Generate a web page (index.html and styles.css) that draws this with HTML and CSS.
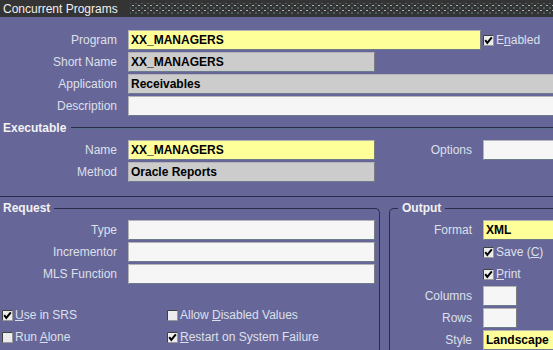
FILE: index.html
```html
<!DOCTYPE html>
<html lang="en">
<head>
  <meta charset="UTF-8">
  <title>Concurrent Programs</title>
  <link rel="stylesheet" href="styles.css">
</head>
<body>

<div class="titlebar">
  <span class="title">Concurrent Programs</span>
  <span class="grip"></span>
</div>

<main class="form">
  <div class="row">
    <span class="lbl">Program</span>
    <div class="field req w353">XX_MANAGERS</div>
    <span class="check ml2">
      <svg width="11" height="11" viewBox="0 0 11 11"><rect x="0.5" y="0.5" width="10" height="10" fill="#ececec" stroke="#9a9a9a"/><path d="M0.5 10.5V0.5H10.5" fill="none" stroke="#404040"/><polyline points="2.2,5.2 4.3,7.8 8.8,2.4" fill="none" stroke="#000" stroke-width="2"/></svg>
      <span>E<u>n</u>abled</span>
    </span>
  </div>
  <div class="row">
    <span class="lbl">Short Name</span>
    <div class="field ro w247">XX_MANAGERS</div>
  </div>
  <div class="row">
    <span class="lbl">Application</span>
    <div class="field ro wide">Receivables</div>
  </div>
  <div class="row">
    <span class="lbl">Description</span>
    <div class="field blank wide"></div>
  </div>

  <div class="section-head"><span>Executable</span><i class="rule"></i></div>

  <div class="row">
    <span class="lbl">Name</span>
    <div class="field req w247">XX_MANAGERS</div>
    <span class="lbl w97">Options</span>
    <div class="field blank wide"></div>
  </div>
  <div class="row">
    <span class="lbl">Method</span>
    <div class="field ro w247">Oracle Reports</div>
  </div>

  <div class="sep"></div>

  <div class="bottom">
    <fieldset class="group request">
      <legend>Request</legend>
      <div class="row first">
        <span class="lbl">Type</span>
        <div class="field blank w247"></div>
      </div>
      <div class="row">
        <span class="lbl">Incrementor</span>
        <div class="field blank w247"></div>
      </div>
      <div class="row">
        <span class="lbl">MLS Function</span>
        <div class="field blank w247"></div>
      </div>

      <div class="checks">
        <span class="check">
          <svg width="11" height="11" viewBox="0 0 11 11"><rect x="0.5" y="0.5" width="10" height="10" fill="#ececec" stroke="#9a9a9a"/><path d="M0.5 10.5V0.5H10.5" fill="none" stroke="#404040"/><polyline points="2.2,5.2 4.3,7.8 8.8,2.4" fill="none" stroke="#000" stroke-width="2"/></svg>
          <span><u>U</u>se in SRS</span>
        </span>
        <span class="check">
          <svg width="11" height="11" viewBox="0 0 11 11"><rect x="0.5" y="0.5" width="10" height="10" fill="#ececec" stroke="#9a9a9a"/><path d="M0.5 10.5V0.5H10.5" fill="none" stroke="#404040"/></svg>
          <span>Allow <u>D</u>isabled Values</span>
        </span>
        <span class="check">
          <svg width="11" height="11" viewBox="0 0 11 11"><rect x="0.5" y="0.5" width="10" height="10" fill="#ececec" stroke="#9a9a9a"/><path d="M0.5 10.5V0.5H10.5" fill="none" stroke="#404040"/></svg>
          <span>Run <u>A</u>lone</span>
        </span>
        <span class="check">
          <svg width="11" height="11" viewBox="0 0 11 11"><rect x="0.5" y="0.5" width="10" height="10" fill="#ececec" stroke="#9a9a9a"/><path d="M0.5 10.5V0.5H10.5" fill="none" stroke="#404040"/><polyline points="2.2,5.2 4.3,7.8 8.8,2.4" fill="none" stroke="#000" stroke-width="2"/></svg>
          <span><u>R</u>estart on System Failure</span>
        </span>
      </div>
    </fieldset>

    <fieldset class="group output">
      <legend>Output</legend>
      <div class="row first">
        <span class="lbl w82">Format</span>
        <div class="field req wide">XML</div>
      </div>
      <div class="row">
        <span class="check ml93">
          <svg width="11" height="11" viewBox="0 0 11 11"><rect x="0.5" y="0.5" width="10" height="10" fill="#ececec" stroke="#9a9a9a"/><path d="M0.5 10.5V0.5H10.5" fill="none" stroke="#404040"/><polyline points="2.2,5.2 4.3,7.8 8.8,2.4" fill="none" stroke="#000" stroke-width="2"/></svg>
          <span>Save (<u>C</u>)</span>
        </span>
      </div>
      <div class="row">
        <span class="check ml93">
          <svg width="11" height="11" viewBox="0 0 11 11"><rect x="0.5" y="0.5" width="10" height="10" fill="#ececec" stroke="#9a9a9a"/><path d="M0.5 10.5V0.5H10.5" fill="none" stroke="#404040"/><polyline points="2.2,5.2 4.3,7.8 8.8,2.4" fill="none" stroke="#000" stroke-width="2"/></svg>
          <span><u>P</u>rint</span>
        </span>
      </div>
      <div class="row">
        <span class="lbl w82">Columns</span>
        <div class="field blank w34"></div>
      </div>
      <div class="row">
        <span class="lbl w82">Rows</span>
        <div class="field blank w34"></div>
      </div>
      <div class="row last">
        <span class="lbl w82">Style</span>
        <div class="field req wide">Landscape</div>
      </div>
    </fieldset>
  </div>
</main>

</body>
</html>
```

FILE: styles.css
```css
:root {
  --bg: #666699;
  --label: #dde0ea;
  --head: #f2f2f2;
  --line: #2c2c4a;
  --req: #ffff99;
  --ro: #cccccc;
  --blank: #f6f6f6;
}
* { box-sizing: border-box; }
body {
  margin: 0;
  width: 553px;
  height: 350px;
  overflow: hidden;
  background: var(--bg);
  font-family: "Liberation Sans", Arial, sans-serif;
  font-size: 12px;
}

.titlebar { height: 17px; background: #343434; display: flex; align-items: center; }
.title { color: #f0f0f0; padding: 0 12px 0 3px; font-size: 12px; }
.grip {
  flex: 1;
  height: 11px;
  background-image:
    radial-gradient(circle, #a9b4b8 0.9px, transparent 1.1px),
    radial-gradient(circle, #5f8a8c 0.9px, transparent 1.1px);
  background-size: 6px 5px;
  background-position: 0 0, 3px 2.5px;
}

.form { padding-top: 13px; overflow: hidden; }
.row { display: flex; align-items: center; height: 20px; margin-bottom: 2px; }
.row.last { margin-bottom: 0; }
.lbl { flex: none; width: 117px; margin-right: 11px; text-align: right; color: var(--label); white-space: nowrap; }
.lbl.w97 { width: 97px; }
.lbl.w82 { width: 82px; }

.field {
  flex: none;
  height: 20px;
  border: 1px solid;
  border-color: #b4b4b4 #7c7c7c #6c7c8c #b4b4b4;
  padding-left: 2px;
  font-weight: bold;
  color: #000;
  line-height: 18px;
  white-space: nowrap;
  overflow: hidden;
}
.field.req { background: var(--req); }
.field.ro { background: var(--ro); }
.field.blank { background: var(--blank); }
.w353 { width: 353px; }
.w247 { width: 247px; }
.w34 { width: 34px; }
.wide { flex: 1; margin-right: -4px; }

.check { display: flex; align-items: center; gap: 2px; color: var(--label); white-space: nowrap; }
.check svg { flex: none; }
.ml2 { margin-left: 2px; }
.ml93 { margin-left: 93px; }

.section-head { display: flex; align-items: center; height: 14px; margin: 5px 0 5px; }
.section-head span { font-weight: bold; color: var(--head); padding: 0 5px 0 3px; }
.rule { flex: 1; border-top: 1px solid var(--line); border-bottom: 1px solid #56708a; }

.sep { height: 1px; background: var(--line); margin: 14px 0 4px; }

.bottom { display: flex; height: 150px; }
.group {
  margin: 0;
  padding: 0;
  border: 1px solid var(--line);
  border-bottom: none;
  border-radius: 5px 5px 0 0;
  min-width: 0;
}
.group legend { padding: 0 4px 0 3px; font-weight: bold; color: var(--head); line-height: 14px; }
.request { width: 381px; margin-left: -1px; }
.output { flex: 1; margin-left: 9px; margin-right: -10px; }
.output legend { margin-left: 8px; padding-left: 4px; }
.group .row.first { margin-top: 5px; }

.checks {
  display: grid;
  grid-template-columns: 165px 1fr;
  grid-auto-rows: 20px;
  row-gap: 2px;
  margin-top: 21px;
  padding-left: 2px;
}
```
